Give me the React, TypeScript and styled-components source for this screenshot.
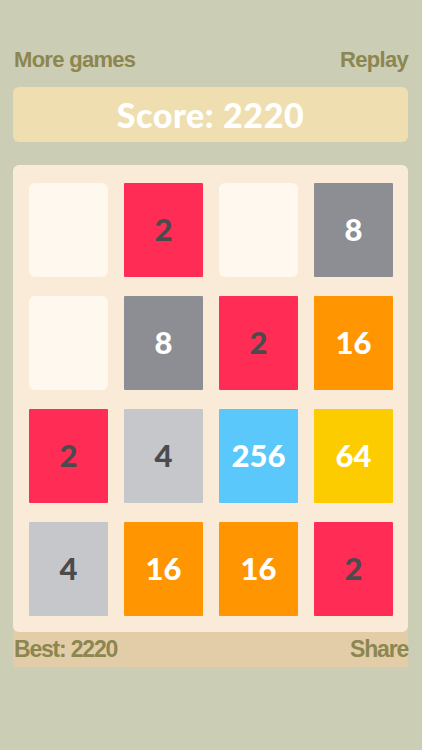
import React from "react";
import styled, { createGlobalStyle } from "styled-components";

const GlobalStyle = createGlobalStyle`
  html, body {
    margin: 0;
    padding: 0;
    background: #cbcdb5;
  }
  body {
    font-family: "Liberation Sans", Arial, sans-serif;
  }
`;

const Page = styled.div`
  width: 422px;
  min-height: 750px;
  box-sizing: border-box;
  padding: 45px 14px 0 13px;
  display: flex;
  flex-direction: column;
`;

const TopBar = styled.div`
  display: flex;
  justify-content: space-between;
  align-items: center;
  height: 30px;
  padding: 0 0 0 1px;
`;

const LinkText = styled.span<{ $size?: number; $track?: number }>`
  font-family: "Liberation Sans", Arial, sans-serif;
  font-weight: 700;
  font-size: ${(p) => p.$size ?? 22}px;
  letter-spacing: ${(p) => p.$track ?? -0.7}px;
  color: #8c8650;
`;

const ScoreBar = styled.div`
  margin-top: 12px;
  height: 55px;
  border-radius: 6px;
  background: #efdfb0;
  display: flex;
  align-items: center;
  justify-content: center;
`;

const ScoreText = styled.span`
  font-family: Lato, "Open Sans", sans-serif;
  font-weight: 900;
  font-size: 34px;
  color: #ffffff;
  letter-spacing: 0.6px;
`;

const BoardWell = styled.div`
  margin-top: 23px;
  background: linear-gradient(transparent 50%, #e2cda8 50%);
  display: flex;
  flex-direction: column;
`;

const Board = styled.div`
  background: #faebd8;
  border-radius: 6px;
  padding: 18px 15px 16px 16px;
  display: grid;
  grid-template-columns: repeat(4, 79px);
  grid-auto-rows: 94px;
  column-gap: 16px;
  row-gap: 19px;
`;

type TileKind = "empty" | "light" | "dark";

const Tile = styled.div<{ $bg: string; $kind: TileKind }>`
  background: ${(p) => p.$bg};
  border-radius: ${(p) => (p.$kind === "empty" ? "6px" : "1px")};
  display: flex;
  align-items: center;
  justify-content: center;
  padding-bottom: 2px;
  box-sizing: border-box;
  font-family: Lato, "Open Sans", sans-serif;
  font-weight: 900;
  font-size: 31px;
  color: ${(p) => (p.$kind === "dark" ? "#4b4b4d" : "#ffffff")};
`;

const Footer = styled.div`
  height: 35px;
  display: flex;
  justify-content: space-between;
  align-items: center;
  background: #e2cda8;
  padding: 0 0 0 1px;
`;

const tileStyles: Record<number, { bg: string; kind: TileKind }> = {
  0: { bg: "#fef8ee", kind: "empty" },
  2: { bg: "#ff2d55", kind: "dark" },
  4: { bg: "#c5c7ca", kind: "dark" },
  8: { bg: "#8d8e93", kind: "light" },
  16: { bg: "#ff9500", kind: "light" },
  64: { bg: "#fccc00", kind: "light" },
  256: { bg: "#5ac8fa", kind: "light" },
};

const grid = [
  [0, 2, 0, 8],
  [0, 8, 2, 16],
  [2, 4, 256, 64],
  [4, 16, 16, 2],
];

export default function App() {
  return (
    <>
      <GlobalStyle />
      <Page>
        <TopBar>
          <LinkText>More games</LinkText>
          <LinkText>Replay</LinkText>
        </TopBar>
        <ScoreBar>
          <ScoreText>Score: 2220</ScoreText>
        </ScoreBar>
        <BoardWell>
          <Board>
            {grid.flat().map((v, i) => {
              const s = tileStyles[v];
              return (
                <Tile key={i} $bg={s.bg} $kind={s.kind}>
                  {v > 0 ? v : null}
                </Tile>
              );
            })}
          </Board>
        </BoardWell>
        <Footer>
          <LinkText $size={23} $track={-1.2}>Best: 2220</LinkText>
          <LinkText $size={23} $track={-1.2}>Share</LinkText>
        </Footer>
      </Page>
    </>
  );
}
